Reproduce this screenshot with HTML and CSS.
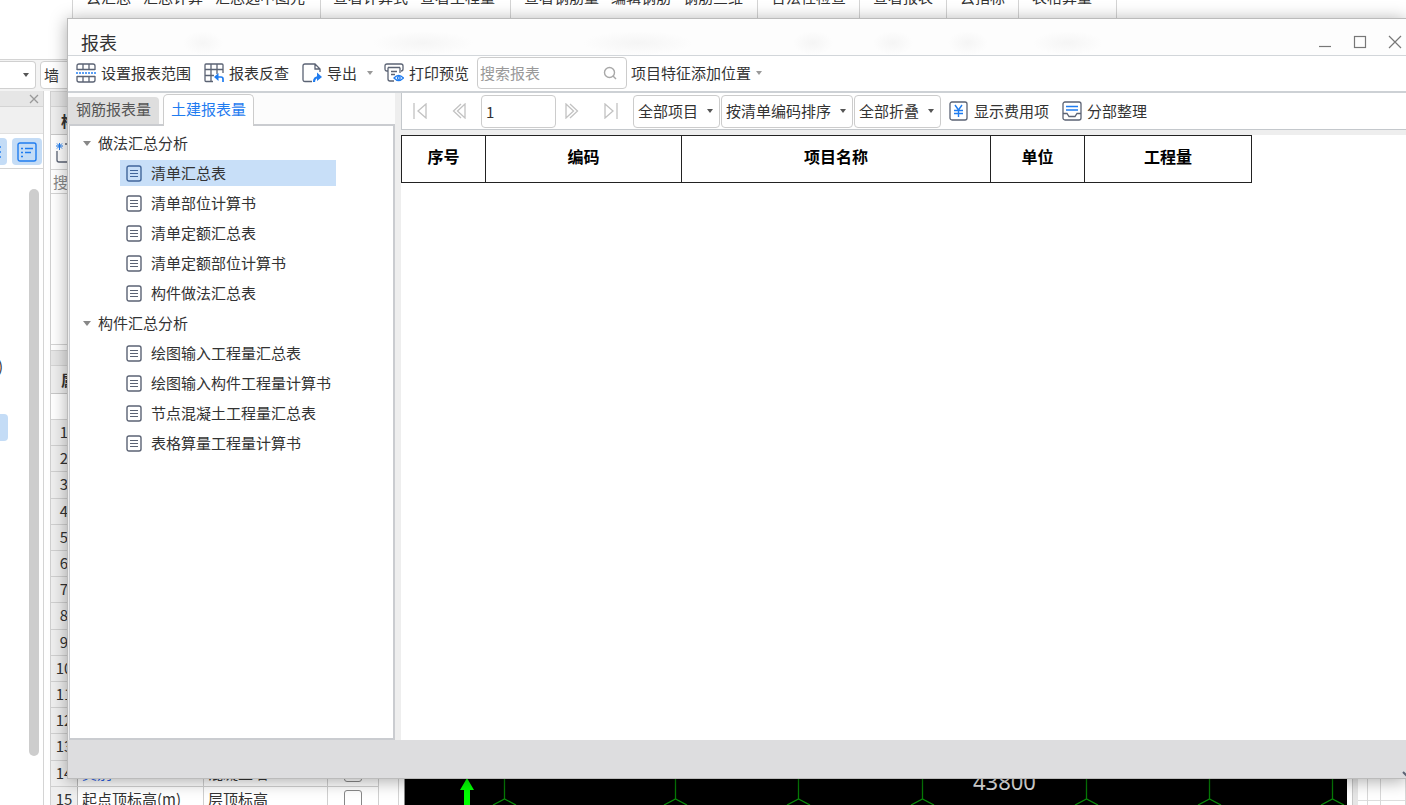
FILE: index.html
```html
<!DOCTYPE html>
<html lang="zh-CN">
<head>
<meta charset="utf-8">
<title>报表</title>
<link rel="stylesheet" href="styles.css">
</head>
<body>
<svg class="defs" aria-hidden="true">
  <symbol id="doc" viewBox="0 0 16 17"><rect x="1" y="1" width="14" height="15" rx="2" fill="none" stroke="currentColor" stroke-width="1.4"/><path d="M4 5.5h8M4 8.5h8M4 11.5h8" stroke="currentColor" stroke-width="1.2"/></symbol>
</svg>

<div class="app">
  <div class="ribbon">
    <div class="group g1"><span>云汇总</span><span>汇总计算</span><span>汇总选中图元</span></div>
    <div class="group g2"><span>查看计算式</span><span>查看工程量</span></div>
    <div class="group g3"><span>查看钢筋量</span><span>编辑钢筋</span><span>钢筋三维</span></div>
    <div class="group"><span>合法性检查</span></div>
    <div class="group"><span>查看报表</span></div>
    <div class="group"><span>云指标</span></div>
    <div class="group"><span>表格算量</span></div>
  </div>
  <div class="selectors">
    <div class="combo first"><i class="caret"></i></div>
    <div class="combo second">墙</div>
  </div>
  <div class="main">
    <div class="nav">
      <div class="nav-head"><svg width="10" height="10" viewBox="0 0 10 10"><path d="M1 1l8 8M9 1l-8 8" stroke="#999" stroke-width="1.3"/></svg></div>
      <div class="nav-sub"></div>
      <div class="nav-tools">
        <button class="tool half" aria-label="列表"><svg width="4" height="20" viewBox="0 0 4 20"><path d="M0 5h1M0 10h1M0 15h1" stroke="#1f7cf0" stroke-width="1.5"/></svg></button>
        <button class="tool" aria-label="树形"><svg width="20" height="20" viewBox="0 0 20 20" fill="none" stroke="#1f7cf0" stroke-width="1.4"><rect x="1" y="1" width="18" height="18" rx="2"/><path d="M4 6.5h2M8 6.5h8M4 10.5h2M8 10.5h6M4 14.500h2"/></svg></button>
      </div>
      <div class="nav-body">
        <div class="nav-text">)</div>
        <div class="nav-selected"></div>
        <div class="nav-scroll"></div>
      </div>
    </div>
    <div class="props">
      <div class="strip"></div>
      <div class="caption">构件列表</div>
      <div class="new"><svg width="20" height="22" viewBox="0 0 20 22" fill="none"><path d="M1 9v9q0 2 2 2h14M9 2h9" stroke="#5b6374" stroke-width="1.3"/><path d="M0 4h7M3.500 1v7M1 1.500l5 5M6 1.500l-5 5" stroke="#1f7cf0"/></svg></div>
      <div class="find">搜索构件</div>
      <div class="list"></div>
      <div class="strip"></div>
      <div class="caption">属性列表</div>
      <div class="blank"></div>
      <div class="rows">
        <div class="row"><b>1</b></div><div class="row"><b>2</b></div><div class="row"><b>3</b></div><div class="row"><b>4</b></div><div class="row"><b>5</b></div><div class="row"><b>6</b></div><div class="row"><b>7</b></div><div class="row"><b>8</b></div><div class="row"><b>9</b></div><div class="row"><b>10</b></div><div class="row"><b>11</b></div><div class="row"><b>12</b></div><div class="row"><b>13</b></div>
        <div class="row"><b>14</b><span class="name blue">类别</span><span class="value">混凝土墙</span><span class="check"><input type="checkbox" aria-label="类别"></span></div>
        <div class="row"><b>15</b><span class="name">起点顶标高(m)</span><span class="value">层顶标高</span><span class="check"><input type="checkbox" aria-label="起点顶标高"></span></div>
      </div>
    </div>
    <div class="props-scroll"></div>
    <div class="canvas">
      <svg width="100%" height="27" fill="none">
        <path d="M62 0L69 12H65V27H59V12H55Z" fill="#00ff00"/>
        <g stroke="#067a06" stroke-width="1.3">
          <path d="M99.500 0V21M270.500 0V21M393.500 0V21M517.500 0V21M681.500 0V21M804.500 0V21M927.500 0V21"/>
          <path d="M88 27l11.500-6l11.500 6M259 27l11.500-6l11.500 6M382 27l11.500-6l11.500 6M506 27l11.500-6l11.500 6M670 27l11.500-6l11.500 6M793 27l11.500-6l11.500 6M916 27l11.500-6l11.500 6" stroke="#0a8a0a"/>
        </g>
        <text x="568" y="12" class="dim">43800</text>
      </svg>
    </div>
    <div class="side"><div class="side-grid"><i></i><i></i><i></i></div></div>
  </div>
</div>

<section class="dialog" aria-label="报表">
  <header class="title">
    <h1>报表</h1>
    <div class="window-buttons">
      <button aria-label="最小化"><svg width="14" height="14" viewBox="0 0 14 14"><path d="M1 11.500h12" stroke="#777" stroke-width="1.2"/></svg></button>
      <button aria-label="最大化"><svg width="14" height="14" viewBox="0 0 14 14"><rect x="1.500" y="1.500" width="11" height="11" fill="none" stroke="#777" stroke-width="1.2"/></svg></button>
      <button aria-label="关闭"><svg width="14" height="14" viewBox="0 0 14 14"><path d="M1 1l12 12M13 1L1 13" stroke="#777" stroke-width="1.2"/></svg></button>
    </div>
  </header>

  <div class="toolbar">
    <button class="command"><svg width="20" height="20" viewBox="0 0 20 20" fill="none" stroke="#5b6374" stroke-width="1.3"><path d="M1 7V3q0-2 2-2h14q2 0 2 2v4M7 1v6M13 1v6M1 6.500h18M1 13v4q0 2 2 2h14q2 0 2-2v-4M7 13v6M13 13v6M1 13.500h18"/><path d="M0 10h20" stroke="#5a9ff5" stroke-width="2" stroke-dasharray="2 1"/></svg>设置报表范围</button>
    <button class="command"><svg width="20" height="20" viewBox="0 0 20 20" fill="none" stroke="#5b6374" stroke-width="1.3"><path d="M9 18.500H2q-1 0-1-1V2q0-1 1-1h16q1 0 1 1v8M1 6.500h18M1 12.500h9M7 1v17.500M13 1v10"/><path d="M19 19v-3q0-2-2-2h-5" stroke="#1f7cf0" stroke-width="1.700"/><path d="M10 14l4.500-4v8z" fill="#1f7cf0" stroke="none"/></svg>报表反查</button>
    <button class="command export"><svg width="20" height="20" viewBox="0 0 20 20" fill="none" stroke="#5b6374" stroke-width="1.3"><path d="M10 18.500H3q-2 0-2-2V3q0-2 2-2h10l5 5v3M13 1v5h5"/><path d="M12 19q0-5 5-5" stroke="#1f7cf0" stroke-width="2.200"/><path d="M15 9.500l5 4.500l-5 4z" fill="#1f7cf0" stroke="none"/></svg>导出<i class="caret light"></i></button>
    <button class="command print"><svg width="20" height="20" viewBox="0 0 20 20" fill="none" stroke="#5b6374" stroke-width="1.3"><path d="M4 8H3Q1 8 1 6V3q0-2 2-2h14q2 0 2 2v3q0 2-2 2M4 4.500h12M4 4.500V16q0 2 2 2h4M16 4.500V10M7 8.500h6M7 11.500h4"/><path d="M10 15q4.500-5 9.500 0q-5 5-9.500 0z" stroke="#1f7cf0"/><circle cx="14.800" cy="15" r="1.400" stroke="#1f7cf0"/></svg>打印预览</button>
    <label class="search"><input type="text" placeholder="搜索报表" aria-label="搜索报表"><svg width="14" height="14" viewBox="0 0 14 14" fill="none" stroke="#a8a8a8" stroke-width="1.4"><circle cx="6.500" cy="6.500" r="5"/><path d="M10 10l3 3"/></svg></label>
    <button class="command place">项目特征添加位置<i class="caret light"></i></button>
  </div>

  <div class="content">
    <aside class="reports">
      <div class="tabs" role="tablist"><button class="tab" role="tab">钢筋报表量</button><button class="tab active" role="tab" aria-selected="true">土建报表量</button></div>
      <div class="tree">
        <div class="branch"><i class="caret"></i>做法汇总分析</div>
        <a class="leaf selected" href="#"><svg><use href="#doc"/></svg>清单汇总表</a>
        <a class="leaf" href="#"><svg><use href="#doc"/></svg>清单部位计算书</a>
        <a class="leaf" href="#"><svg><use href="#doc"/></svg>清单定额汇总表</a>
        <a class="leaf" href="#"><svg><use href="#doc"/></svg>清单定额部位计算书</a>
        <a class="leaf" href="#"><svg><use href="#doc"/></svg>构件做法汇总表</a>
        <div class="branch"><i class="caret"></i>构件汇总分析</div>
        <a class="leaf" href="#"><svg><use href="#doc"/></svg>绘图输入工程量汇总表</a>
        <a class="leaf" href="#"><svg><use href="#doc"/></svg>绘图输入构件工程量计算书</a>
        <a class="leaf" href="#"><svg><use href="#doc"/></svg>节点混凝土工程量汇总表</a>
        <a class="leaf" href="#"><svg><use href="#doc"/></svg>表格算量工程量计算书</a>
      </div>
    </aside>

    <div class="viewer">
      <div class="pager">
        <div class="arrows">
          <button aria-label="首页"><svg width="14" height="16" viewBox="0 0 14 16"><path d="M1 0v16M13 1v14L5 8z"/></svg></button>
          <button aria-label="上一页"><svg width="14" height="16" viewBox="0 0 14 16"><path d="M9 1L1.500 8L9 15M13 1v14L5.500 8z"/></svg></button>
        </div>
        <input class="page" type="text" value="1" aria-label="页码">
        <div class="arrows">
          <button aria-label="下一页"><svg width="14" height="16" viewBox="0 0 14 16"><path d="M5 1l7.500 7L5 15M1 1v14l7.500-7z"/></svg></button>
          <button aria-label="末页"><svg width="14" height="16" viewBox="0 0 14 16"><path d="M13 0v16M1 1v14l8-7z"/></svg></button>
        </div>
        <div class="selects">
          <span class="select"><select aria-label="项目"><option>全部项目</option></select><i class="caret"></i></span>
          <span class="select"><select aria-label="排序"><option>按清单编码排序</option></select><i class="caret"></i></span>
          <span class="select"><select aria-label="折叠"><option>全部折叠</option></select><i class="caret"></i></span>
        </div>
        <button class="command"><svg width="20" height="20" viewBox="0 0 20 20" fill="none" stroke="#5b6374" stroke-width="1.300"><rect x="1" y="1" width="17" height="18" rx="2"/><path d="M6 4l3.500 5L13 4M9.500 9v7M5 9.500h9M5 12.500h9" stroke="#1f7cf0" stroke-width="1.400"/></svg>显示费用项</button>
        <button class="command"><svg width="20" height="20" viewBox="0 0 20 20" fill="none" stroke="#5b6374" stroke-width="1.300"><rect x="1" y="1" width="18" height="18" rx="2"/><path d="M1 12.500h4l2 3h6l2-3h4"/><path d="M4 5.500h12M4 9h12" stroke="#1f7cf0" stroke-width="1.400"/></svg>分部整理</button>
      </div>
      <div class="sheet">
        <table>
          <colgroup><col class="c-no"><col class="c-code"><col class="c-name"><col class="c-unit"><col class="c-qty"></colgroup>
          <thead><tr><th>序号</th><th>编码</th><th>项目名称</th><th>单位</th><th>工程量</th></tr></thead>
        </table>
      </div>
    </div>
  </div>
  <footer class="status"><svg width="8" height="8" viewBox="0 0 8 8"><path d="M1 2l3 3l4-4" fill="none" stroke="#5b6374" stroke-width="2"/></svg></footer>
</section>
</body>
</html>
```
FILE: styles.css
```css
* { box-sizing: border-box; }
body {
  margin: 0;
  height: 100vh;
  overflow: hidden;
  position: relative;
  font: 15px/20px "Noto Sans CJK SC", sans-serif;
  color: #333;
  background: #fff;
}
button, input, select { font: inherit; color: inherit; margin: 0; }
button { border: 0; padding: 0; background: none; white-space: nowrap; }
svg { flex: none; display: block; }
.defs { position: absolute; width: 0; height: 0; }
.caret {
  flex: none;
  border: 3px solid transparent;
  border-top: 4px solid #555;
  border-bottom: 0;
}
.caret.light { border-top-color: #999; }

/* main window */
.app { height: 100%; display: flex; flex-direction: column; }
.ribbon {
  flex: none;
  display: flex;
  height: 59px;
  padding-left: 72px;
  overflow: hidden;
}
.group {
  flex: none;
  display: flex;
  gap: 12px;
  padding: 0 13px;
  border-left: 1px solid #d4d4d4;
  white-space: nowrap;
}
.group:last-child { padding-right: 24px; border-right: 1px solid #d4d4d4; }
.group span { margin-top: -13px; }
.group.g1 { width: 248px; }
.group.g2 { width: 190px; padding: 0 12px; }
.group.g3 { width: 247px; }
.selectors {
  flex: none;
  display: flex;
  gap: 4px;
  height: 32px;
  padding: 1px 0 2px;
  border-top: 1px solid #d4d4d4;
  background: #f3f3f3;
}
.combo {
  display: flex;
  align-items: center;
  border: 1px solid #d0d0d0;
  border-radius: 4px;
  background: #fff;
}
.combo.first { width: 36px; justify-content: flex-end; padding-right: 6px; border-left: 0; border-radius: 0 4px 4px 0; }
.combo.second { width: 120px; padding-left: 3px; }
.main { flex: 1; display: flex; min-height: 0; overflow: hidden; }

.nav { flex: none; width: 44px; margin-right: 6px; display: flex; flex-direction: column; border-right: 1px solid #d4d4d4; }
.nav-head { height: 16px; display: flex; align-items: center; justify-content: flex-end; padding-right: 4px; background: #e6e6e6; border-bottom: 1px solid #d4d4d4; }
.nav-sub { height: 27px; background: #f0f0f0; border-bottom: 1px solid #e0e0e0; }
.nav-tools { display: flex; gap: 5px; height: 35px; padding: 4px 0; border-bottom: 1px solid #d4d4d4; }
.tool { width: 30px; height: 27px; display: flex; align-items: center; justify-content: center; border-radius: 4px; background: #c4dcf6; }
.tool.half { width: 7px; justify-content: flex-start; border-radius: 0 4px 4px 0; }
.nav-body { flex: 1; display: grid; grid-template-columns: 29px 10px; grid-template-rows: 13px 194px 38px 27px 1fr; }
.nav-text { grid-area: 2 / 1; align-self: end; margin-left: -2px; }
.nav-selected { grid-area: 4 / 1; width: 8px; border-radius: 0 4px 4px 0; background: #c4dcf6; }
.nav-scroll { grid-area: 2 / 2 / 6 / 3; margin: 7px 0 49px; border-radius: 5px; background: #cdcdcd; }

.props { flex: none; width: 329px; border-left: 1px solid #d0d0d0; }
.strip { height: 16px; background: #e6e6e6; border: 1px solid #d4d4d4; border-left: 0; }
.caption { height: 28px; padding: 4px 10px; font-weight: bold; background: #efefef; border-bottom: 1px solid #c8c8c8; }
.new { height: 35px; padding: 7px 5px; border-bottom: 1px solid #d4d4d4; }
.find { height: 24px; padding: 2px; color: #888; border-bottom: 1px solid #d4d4d4; }
.list { height: 151px; margin-bottom: 5px; border-bottom: 1px solid #d4d4d4; }
.blank { height: 26px; border-bottom: 1px solid #d4d4d4; }
.rows { height: 393px; display: grid; grid-template-rows: repeat(15, 1fr); }
.row { display: grid; grid-template-columns: 27px 126px 124px 1fr; min-height: 0; line-height: 24px; border-bottom: 1px solid #d0d0d0; }
.row > * { padding-left: 4px; border-right: 1px solid #d0d0d0; overflow: hidden; white-space: nowrap; }
.row b { padding: 0; text-align: center; font-weight: normal; background: #efefef; border-right-color: #b8b8b8; }
.blue { color: #2b5fe8; }
.row .check { display: flex; align-items: center; justify-content: center; padding: 0; }
.check input { appearance: none; width: 18px; height: 18px; border: 1px solid #888; border-radius: 3px; background: #fff; }
.props-scroll { flex: none; width: 26px; border-right: 1px solid #888; background: linear-gradient(90deg, #fff 19px, #d4d4d4 19px, #d4d4d4 20px, #fff 20px); }
.canvas { flex: 1; display: flex; align-items: flex-end; background: #000; overflow: hidden; }
.dim { font: 22px "Noto Sans", sans-serif; fill: #ddd; }
.side { flex: none; width: 59px; display: flex; padding-left: 5px; }
.side-grid { flex: 1; display: grid; grid-template-columns: 15px 13px 1fr; border-left: 1px solid #c8c8c8; background: linear-gradient(#ddd, #ddd) 5px calc(100% - 4px) / 100% 1px no-repeat; }
.side-grid i { border-right: 1px solid #d8d8d8; }
.side-grid i:first-child { box-shadow: inset 5px 0 #e6e6e6; }

/* report dialog */
.dialog {
  position: absolute;
  inset: 18px 0 26px 67px;
  display: flex;
  flex-direction: column;
  border: 1px solid #bbb;
  border-right: 0;
  background: #fff;
  box-shadow: 0 2px 16px rgba(0, 0, 0, .34);
}
.title {
  flex: none;
  height: 37px;
  display: flex;
  align-items: center;
  justify-content: space-between;
  padding: 9px 4px 0 13px;
  border-bottom: 1px solid #d2d6da;
  background:
    radial-gradient(closest-side, #f6f6f6, transparent) 115px 12px / 40px 24px no-repeat,
    radial-gradient(closest-side, #f5f5f5, transparent) 305px 12px / 100px 24px no-repeat,
    radial-gradient(closest-side, #f5f5f5, transparent) 515px 12px / 110px 24px no-repeat,
    radial-gradient(closest-side, #f5f5f5, transparent) 725px 12px / 40px 24px no-repeat,
    radial-gradient(closest-side, #f5f5f5, transparent) 805px 12px / 40px 24px no-repeat,
    radial-gradient(closest-side, #f5f5f5, transparent) 880px 12px / 40px 24px no-repeat,
    radial-gradient(closest-side, #f5f5f5, transparent) 965px 12px / 70px 24px no-repeat,
    #fdfdfd;
}
.title h1 { margin: 0; font-size: 18px; line-height: 24px; font-weight: normal; }
.window-buttons { display: flex; gap: 21px; }
.toolbar { flex: none; display: flex; align-items: center; height: 37px; padding: 0 0 1px 8px; border-bottom: 2px solid #cdd1d5; }
.command { display: flex; align-items: center; gap: 5px; margin-right: 13px; }
.export .caret { margin-left: 5px; }
.export { margin-right: 11px; }
.print { margin-right: 8px; }
.search { display: flex; align-items: center; width: 150px; height: 32px; margin-right: 4px; padding-right: 9px; border: 1px solid #ccc; border-radius: 4px; }
.search input { flex: 1; min-width: 0; padding: 0 2px; border: 0; outline: 0; background: none; }
.search input::placeholder { color: #999; opacity: 1; }

.content { flex: 1; display: flex; min-height: 0; background: #eee; }
.reports { flex: none; width: 327px; display: flex; flex-direction: column; }
.tabs { flex: none; display: flex; align-items: flex-end; gap: 4px; height: 31px; background: #fcfcfc; }
.tab { height: 27px; padding: 0 8px 3px; color: #555; background: #dedede; border-radius: 0 4px 0 0; }
.tab.active { height: 32px; padding: 0 7px 3px; margin-bottom: -2px; color: #1f7cf0; background: #fff; border: 1px solid #ccc; border-bottom: 0; border-radius: 5px 5px 0 0; z-index: 1; }
.tree { flex: 1; display: flex; flex-direction: column; margin-left: 1px; padding: 2px 0; border: 2px solid #caccd0; border-left-width: 1px; background: #fff; }
.branch { display: flex; align-items: center; gap: 7px; height: 30px; padding-left: 13px; }
.branch .caret { border-width: 4px; border-top: 5px solid #888; border-bottom: 0; }
.leaf { display: flex; align-items: center; gap: 9px; width: 216px; height: 26px; margin: 2px 0 2px 50px; padding-left: 6px; color: inherit; text-decoration: none; white-space: nowrap; }
.leaf svg { width: 16px; height: 17px; color: #5b6374; }
.leaf.selected { background: #c8dff8; }
.leaf.selected svg { color: #40659a; }

.viewer { flex: 1; min-width: 0; display: flex; flex-direction: column; margin-left: 6px; }
.pager { flex: none; display: flex; align-items: center; height: 37px; padding-left: 11px; border-left: 1px solid #c4c8cc; border-bottom: 1px solid #c4c8cc; background: #fff; }
.arrows { display: flex; gap: 25px; }
.arrows path { fill: none; stroke: #c2c2c2; stroke-width: 1.3; }
.page { width: 75px; height: 33px; margin: 0 9px 0 15px; padding: 0 4px; border: 1px solid #ccc; border-radius: 4px; }
.selects { display: flex; gap: 1px; margin: 0 8px 0 15px; }
.select { display: flex; align-items: center; height: 33px; padding: 0 6px 0 4px; border: 1px solid #ccc; border-radius: 4px; }
.select select { appearance: none; border: 0; outline: 0; padding: 0 8px 0 0; background: none; }
.sheet { flex: 1; margin-top: 5px; background: #fff; }
table { border-collapse: collapse; table-layout: fixed; width: 850px; }
th { height: 47px; padding: 0 0 6px; border: 1px solid #222; color: #000; font-size: 16px; line-height: 24px; }
.c-no { width: 84px; }
.c-code { width: 196px; }
.c-name { width: 309px; }
.c-unit { width: 94px; }
.c-qty { width: 167px; }
.status { flex: none; display: flex; justify-content: flex-end; align-items: flex-end; height: 38px; background: #dddddf; overflow: hidden; }
.status svg { margin-right: -4px; }
```
